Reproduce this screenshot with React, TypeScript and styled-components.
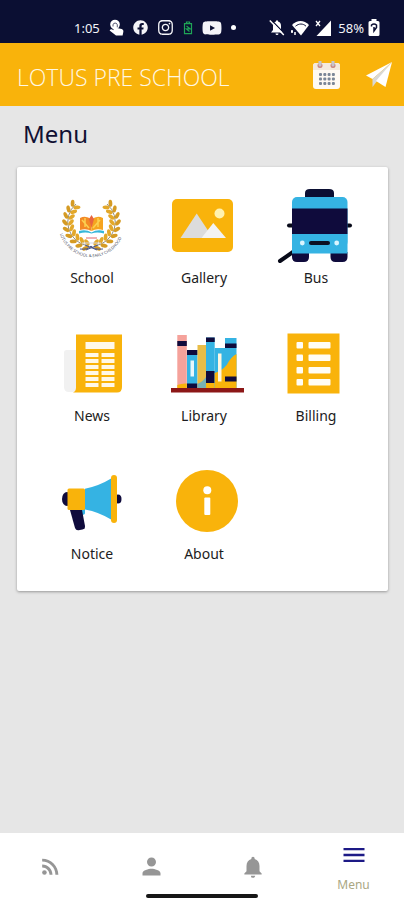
import React from "react";
import styled, { createGlobalStyle } from "styled-components";
import { FaFacebook, FaInstagram, FaYoutube } from "react-icons/fa";
import { MdMenu, MdNotifications, MdPerson, MdRssFeed } from "react-icons/md";

const amber = "#f9b30b";
const navy = "#0b0f33";
const ink = "#0f0b3c";
const sky = "#35b3e3";

const GlobalStyle = createGlobalStyle`
  *, *::before, *::after { box-sizing: border-box; }
  body { margin: 0; background: #e6e6e6; font-family: "Noto Sans", sans-serif; }
`;

const Screen = styled.div`
  min-height: 100vh;
  display: flex;
  flex-direction: column;
  background: #e6e6e6;
`;

const StatusBar = styled.div`
  display: flex;
  align-items: center;
  justify-content: space-between;
  height: 43px;
  padding: 12px 24px 0 74px;
  background: ${navy};
  color: #f4f4f8;
  font: 400 13px/20px "Noto Sans", sans-serif;
`;

const StatusGroup = styled.div<{ $gap: number }>`
  display: flex;
  align-items: center;
  gap: ${(p) => p.$gap}px;
  svg { display: block; }
`;

const Dot = styled.span`
  width: 5px;
  height: 5px;
  border-radius: 50%;
  background: #fff;
`;

const Header = styled.header`
  display: flex;
  align-items: center;
  justify-content: space-between;
  height: 63px;
  padding: 0 12px 0 17px;
  background: ${amber};
`;

const Title = styled.h1`
  margin: 0;
  padding-top: 5px;
  color: #fff8e4;
  font: 300 23px/32px "Open Sans", sans-serif;
  white-space: nowrap;
`;

const HeaderActions = styled.div`
  display: flex;
  gap: 26px;
`;

const IconButton = styled.button`
  padding: 0;
  border: 0;
  background: none;
  cursor: pointer;
  svg { display: block; }
`;

const Main = styled.main`
  flex: 1;
  padding: 12px 16px 24px 17px;
`;

const Heading = styled.h2`
  margin: 0 0 17px 6px;
  color: #101033;
  font: 400 24px/32px "Noto Sans", sans-serif;
`;

const Card = styled.section`
  display: grid;
  grid-template-columns: repeat(3, 1fr);
  row-gap: 38px;
  padding: 21px 16px 27px 19px;
  background: #fff;
  border-radius: 2px;
  box-shadow: 0 1px 3px rgba(0, 0, 0, 0.35);
`;

const Tile = styled.button`
  display: flex;
  flex-direction: column;
  align-items: center;
  gap: 4px;
  padding: 0;
  border: 0;
  background: none;
  color: #1c1c22;
  font: 400 14px/20px "Noto Sans", sans-serif;
  cursor: pointer;
`;

const TileArt = styled.svg`
  display: block;
  width: 76px;
  height: 76px;
  overflow: visible;
`;

const BottomNav = styled.nav`
  position: relative;
  display: grid;
  grid-template-columns: repeat(4, 1fr);
  height: 67px;
  background: #fff;
`;

const NavLink = styled.a<{ $active?: boolean }>`
  display: flex;
  flex-direction: column;
  align-items: center;
  justify-content: ${(p) => (p.$active ? "flex-start" : "center")};
  gap: 8px;
  padding-top: ${(p) => (p.$active ? 8 : 0)}px;
  color: ${(p) => (p.$active ? "#1d1a86" : "#969696")};
  text-decoration: none;
  svg { display: block; }
`;

const NavLabel = styled.span`
  color: #aaa783;
  font: 400 12px/16px "Noto Sans", sans-serif;
`;

const HomeIndicator = styled.div`
  position: absolute;
  bottom: 2px;
  left: 50%;
  width: 112px;
  height: 4px;
  margin-left: -56px;
  border-radius: 2px;
  background: #161616;
`;

function Touch() {
  return (
    <svg width="15" height="17" viewBox="0 0 15 17" fill="#fff">
      <circle cx="6" cy="5.500" r="4.800" />
      <path d="M4.500 6q0-1.800 1.600-1.800T7.700 6v3l5 1q2 .6 1.700 2.500l-.8 4H7L.6 11.500q1-1.800 2.700-1l1.200.8z" />
      <path d="M4 7.500V5.800a2.200 2.200 0 014.300 0v2.500" fill="none" stroke={navy} strokeWidth="0.700" />
    </svg>
  );
}

function BellOff() {
  return (
    <svg width="16" height="17" viewBox="0 0 16 17">
      <path d="M2 13.500l2-2.500V7q0-4 3-4.500V1.500h2v1q3 .5 3 4.500v4l2 2.500zM6.500 14.500h3a1.500 1.500 0 01-3 0z" fill="#fff" />
      <path d="M2.300 1L15.800 14.800" stroke={navy} strokeWidth="1.200" />
      <path d="M.8 1.500L14.800 16" stroke="#fff" strokeWidth="1.500" />
    </svg>
  );
}

function BatterySaver() {
  return (
    <svg width="10" height="14" viewBox="0 0 10 14" fill="none" stroke="#1fa556" strokeWidth="1.200">
      <path d="M3.500 2V1h3v1M1.500 2.700h7v10h-7zM3.500 5l3.500 2.700-3.500.3 3 2.500" />
    </svg>
  );
}

function Wifi() {
  return (
    <svg width="18" height="16" viewBox="0 0 18 16">
      <path d="M1 5C6-.3 13-.3 18 5l-8 10.500z" fill="#fff" />
      <path d="M4.500 6.200C8 3.300 12 3.300 15 6.200" stroke={navy} strokeWidth="1" fill="none" />
      <path d="M1 10v3m-1-1.500h2M4 12v3" stroke="#fff" strokeWidth="1.500" />
    </svg>
  );
}

function Signal() {
  return (
    <svg width="17" height="16" viewBox="0 0 17 16">
      <path d="M16 .5V16H1.500z" fill="#fff" />
      <path d="M1 1l4 5M5 1L1 6" stroke="#fff" strokeWidth="1.300" />
    </svg>
  );
}

function Battery() {
  return (
    <svg width="12" height="17" viewBox="0 0 12 17">
      <path d="M3.500 0h5v2H10a1.500 1.500 0 011.500 1.500v12A1.500 1.500 0 0110 17H2A1.500 1.500 0 01.5 15.500v-12A1.500 1.500 0 012 2h1.500z" fill="#fff" />
      <path d="M3.500 7.500V6q2.500-2 5 0v2.500L6 12V8" fill="none" stroke={navy} strokeWidth="1.500" />
    </svg>
  );
}

function Calendar() {
  return (
    <svg width="27" height="28" viewBox="0 0 27 28">
      <rect x="0" y="2" width="27" height="26" rx="3" fill="#fffaf3" />
      <path d="M0 9V5a3 3 0 013-3h21a3 3 0 013 3v4z" fill="#f4e9dc" />
      <circle cx="7" cy="4.500" r="2.500" fill="#c9837d" />
      <circle cx="20" cy="4.500" r="2.500" fill="#c9837d" />
      <path d="M7 0v4M20 0v4" stroke="#c6c5cc" strokeWidth="3" strokeLinecap="round" />
      {[12, 16.5, 21].map((y) =>
        [6, 10.3, 14.600, 18.900].map((x) => <rect key={`${x}-${y}`} x={x} y={y} width="3" height="3" rx="1" fill="#7c8797" />)
      )}
    </svg>
  );
}

function Plane() {
  return (
    <svg width="26" height="28" viewBox="0 0 26 28">
      <path d="M26 1L0 14.500l6.500 3.500z" fill="#fff" />
      <path d="M26 1L6.500 18v8l4-5.300z" fill="#d9d8d4" />
      <path d="M26 1L10 20l9.500 6z" fill="#fff" />
    </svg>
  );
}

const leafSteps = Array.from({ length: 9 }, (_, i) => 104 + i * 15);

function Branch() {
  return (
    <g>
      <path d="M35 58A24 24 0 0122 16" fill="none" stroke="#7b745e" strokeWidth="0.800" />
      {leafSteps.map((deg) => {
        const rad = (deg * Math.PI) / 180;
        return [21, 27].map((r, side) => {
          const x = 38 + r * Math.cos(rad);
          const y = 34 + r * Math.sin(rad);
          return (
            <ellipse
              key={`${deg}-${side}`}
              cx={x}
              cy={y}
              rx="3.600"
              ry="1.900"
              fill={side ? "#d59b24" : "#e3a82a"}
              transform={`rotate(${deg + (side ? 50 : 130)} ${x} ${y})`}
            />
          );
        });
      })}
    </g>
  );
}

function SchoolArt() {
  return (
    <TileArt viewBox="0 0 76 76">
      <Branch />
      <g transform="matrix(-1 0 0 1 75 0)">
        <Branch />
      </g>
      <path d="M26 30q6-3 11.500 1.500V43q-5-3-11.500-1z" fill="#f38a25" />
      <path d="M49 30q-6-3-11.500 1.500V43q5-3 11.500-1z" fill="#f6a41f" />
      <path d="M28 32l7 8M46 32l-7 8M31 30v9M44 30v9" stroke="#fbd151" strokeWidth="1.500" />
      <path d="M35 31l2.500-4 2.500 4-2.500 9z" fill="#e8653f" />
      <path d="M25 43q7-2 12.500 1.500Q43 41 50 43v2.500q-7-2-12.500 0-6-2-12.500 0z" fill="#36b7da" />
      <path d="M32 50h11" stroke="#eeb2b4" strokeWidth="2" />
      <path d="M28 55h19" stroke="#d5d6e2" strokeWidth="1" />
      <path d="M26 61q8 1 11-3 3 4 12 3M31 57l12 5M44 57l-12 5" fill="none" stroke="#4b5688" strokeWidth="1" />
      <path id="crest-arc" d="M6 46A33 33 0 0069 46" fill="none" />
      <text fontSize="4" fontFamily="Noto Sans, sans-serif" fill="#4c4f64">
        <textPath href="#crest-arc">LOTUS PRE SCHOOL &amp; EARLY CHILDHOOD</textPath>
      </text>
    </TileArt>
  );
}

function GalleryArt() {
  return (
    <TileArt viewBox="0 0 76 76">
      <rect x="6" y="11" width="61" height="53" rx="5" fill={amber} />
      <path d="M14.500 50l16.200-24.500L47 50z" fill="#dcdcdc" />
      <path d="M35.500 50l11.800-15L60 50z" fill="#f3f3f3" />
      <circle cx="53.500" cy="25.500" r="5" fill="#fff2b0" />
    </TileArt>
  );
}

function BusArt() {
  return (
    <TileArt viewBox="0 0 76 76">
      <path d="M2 73l13-9" stroke="#080a19" strokeWidth="4" strokeLinecap="round" />
      <path d="M27 10V5q0-4 5-4h19q5 0 5 4v5z" fill={navy} />
      <path d="M14 64h17v5q0 5-5 5h-7q-5 0-5-5zM52.500 64h17v5q0 5-5 5h-7q-5 0-5-5z" fill={ink} />
      <rect x="9" y="35.500" width="65" height="4" rx="2" fill="#080a19" />
      <rect x="14" y="9" width="55.500" height="50" rx="5" fill={sky} />
      <rect x="14" y="46" width="55.500" height="19.500" fill={sky} />
      <rect x="14" y="20.500" width="55.500" height="25.500" fill={ink} />
      <rect x="31" y="53" width="21" height="4" rx="2" fill="#0b1022" />
      <circle cx="24.300" cy="55" r="2.400" fill="#d9f5ff" />
      <circle cx="58.700" cy="55" r="2.400" fill="#d9f5ff" />
    </TileArt>
  );
}

function NewsArt() {
  return (
    <TileArt viewBox="0 0 76 76">
      <path d="M23 24H12.500q-2.500 0-2.500 2.500V61q0 5 5 5h8z" fill="#f1f1f1" />
      <path d="M22 8.500h46V61q0 5.500-5 5.500H19q3-1 3-5z" fill={amber} />
      <rect x="31.500" y="16" width="29" height="7" fill="#fff8e8" />
      {[27, 33, 39, 45, 51, 57].map((y) => (
        <g key={y} fill="#fff8e8">
          <rect x="31.500" y={y} width="13" height="4" rx="0.500" />
          <rect x="47.500" y={y} width="13" height="4" rx="0.500" />
        </g>
      ))}
    </TileArt>
  );
}

function LibraryArt() {
  return (
    <TileArt viewBox="0 0 76 76">
      <rect x="11.300" y="9" width="9.500" height="53" fill="#f5a29b" />
      <rect x="11.300" y="15" width="9.500" height="5" fill={ink} />
      <path d="M11.300 59q5-2 9.500-1.500V62h-9.500z" fill={amber} />
      <rect x="21" y="24" width="10.500" height="38" fill={sky} />
      <path d="M21 24h10.500v5H21zM21 57.500h10.500V62H21z" fill={ink} />
      <rect x="24.500" y="34.500" width="3.500" height="16" fill="#e7f7fc" />
      <rect x="31.500" y="19" width="8.500" height="43" fill="#e9bd47" />
      <path d="M31.500 62v-4q5-2 8.500-7v11z" fill="#78b1b5" />
      <rect x="40" y="11.500" width="8.700" height="50.500" fill={sky} />
      <path d="M40 11.500h8.700V16H40zM40 45h8.700v12H40z" fill={ink} />
      <rect x="40" y="57" width="8.700" height="5" fill={amber} />
      <rect x="48.700" y="22" width="10.500" height="40" fill={sky} />
      <rect x="59" y="12" width="11.500" height="50" fill={sky} />
      <path d="M48.700 47q7-2 12-8 4-8 9.800-11v34H48.700z" fill={amber} />
      <path d="M59 17.500h11.500V22H59zM59 50.500h11.500v5H59z" fill={ink} />
      <rect x="52" y="27.500" width="3.500" height="28" fill="#fff7e2" />
      <rect x="5" y="62" width="73" height="4.500" fill="#8c1717" />
    </TileArt>
  );
}

function BillingArt() {
  return (
    <TileArt viewBox="0 0 76 76">
      <rect x="9.500" y="7.500" width="52" height="60" fill={amber} />
      {[16, 28.5, 41, 53].map((y) => (
        <g key={y} fill="#fffdf6">
          <rect x="18.500" y={y} width="6.500" height="6.500" rx="1" />
          <rect x="30.500" y={y} width="22" height="6.500" rx="1" />
        </g>
      ))}
    </TileArt>
  );
}

function NoticeArt() {
  return (
    <TileArt viewBox="0 0 76 76">
      <ellipse cx="13" cy="35" rx="5" ry="7" fill={ink} />
      <ellipse cx="64" cy="35" rx="3.500" ry="4.500" fill={ink} />
      <path d="M27 45h4v4q0 2-4 2z" fill={sky} />
      <path d="M16 46h12l3 16q.3 3-2.500 3.500l-4 .7Q22 66.500 21 64z" fill={ink} />
      <path d="M31 24.700Q45 22 58 14v42Q45 48 31 45.500z" fill={sky} />
      <rect x="13.500" y="24.500" width="17.500" height="21.500" rx="1.500" fill={amber} />
      <rect x="57" y="11" width="6" height="48" rx="3" fill={amber} />
    </TileArt>
  );
}

function AboutArt() {
  return (
    <TileArt viewBox="0 0 76 76">
      <circle cx="41" cy="37" r="31" fill={amber} />
      <circle cx="41.300" cy="26.300" r="4" fill="#fff" />
      <rect x="38.300" y="33.500" width="6" height="17.500" rx="1" fill="#fff" />
    </TileArt>
  );
}

const tiles = [
  { label: "School", Art: SchoolArt },
  { label: "Gallery", Art: GalleryArt },
  { label: "Bus", Art: BusArt },
  { label: "News", Art: NewsArt },
  { label: "Library", Art: LibraryArt },
  { label: "Billing", Art: BillingArt },
  { label: "Notice", Art: NoticeArt },
  { label: "About", Art: AboutArt },
];

export default function App() {
  return (
    <Screen>
      <GlobalStyle />
      <StatusBar>
        <StatusGroup $gap={9}>
          <span>1:05</span>
          <Touch />
          <FaFacebook size={15} />
          <FaInstagram size={17} />
          <BatterySaver />
          <FaYoutube size={20} />
          <Dot />
        </StatusGroup>
        <StatusGroup $gap={6}>
          <BellOff />
          <Wifi />
          <Signal />
          <StatusGroup $gap={4}>
            <span>58%</span>
            <Battery />
          </StatusGroup>
        </StatusGroup>
      </StatusBar>
      <Header>
        <Title>LOTUS PRE SCHOOL</Title>
        <HeaderActions>
          <IconButton type="button" aria-label="Calendar"><Calendar /></IconButton>
          <IconButton type="button" aria-label="Send"><Plane /></IconButton>
        </HeaderActions>
      </Header>
      <Main>
        <Heading>Menu</Heading>
        <Card>
          {tiles.map(({ label, Art }) => (
            <Tile key={label} type="button">
              <Art />
              <span>{label}</span>
            </Tile>
          ))}
        </Card>
      </Main>
      <BottomNav>
        <NavLink href="#feed" aria-label="Feed"><MdRssFeed size={25} /></NavLink>
        <NavLink href="#profile" aria-label="Profile"><MdPerson size={27} /></NavLink>
        <NavLink href="#alerts" aria-label="Notifications"><MdNotifications size={26} /></NavLink>
        <NavLink href="#menu" $active>
          <MdMenu size={28} />
          <NavLabel>Menu</NavLabel>
        </NavLink>
        <HomeIndicator />
      </BottomNav>
    </Screen>
  );
}
